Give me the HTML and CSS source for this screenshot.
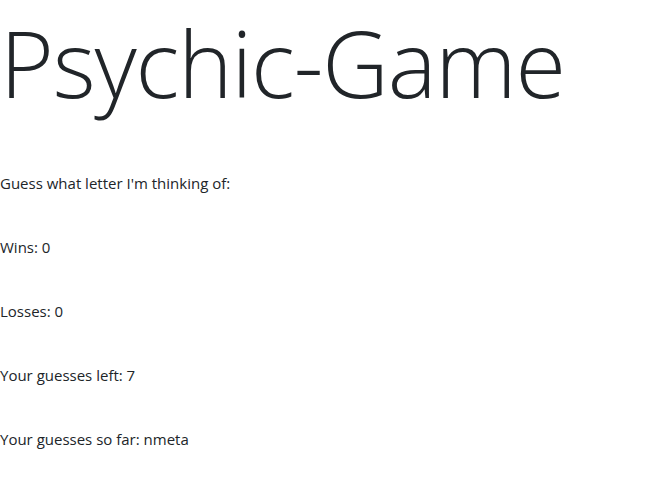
FILE: index.html
```html
<!DOCTYPE html>
<html>
<head>
<meta charset="utf-8">
<link rel="stylesheet" href="styles.css">
</head>
<body>
<h1 class="title">Psychic-Game</h1>
<div class="stats">
<p class="line">Guess what letter I'm thinking of:</p>
<p class="line">Wins: 0</p>
<p class="line">Losses: 0</p>
<p class="line">Your guesses left: 7</p>
<p class="line">Your guesses so far: nmeta</p>
</div>
</body>
</html>
```
FILE: styles.css
```css
html, body {
  margin: 0;
  padding: 0;
  background: #fff;
}
body {
  font-family: "Open Sans", "Noto Sans", sans-serif;
  color: #212529;
  font-size: 15px;
  line-height: 24px;
}
.title {
  margin: 0;
  font-size: 92px;
  font-weight: 300;
  line-height: 125px;
  letter-spacing: -1.1px;
}
.stats {
  display: flex;
  flex-direction: column;
  gap: 40px;
  padding-top: 46px;
}
.line {
  margin: 0;
}
```
